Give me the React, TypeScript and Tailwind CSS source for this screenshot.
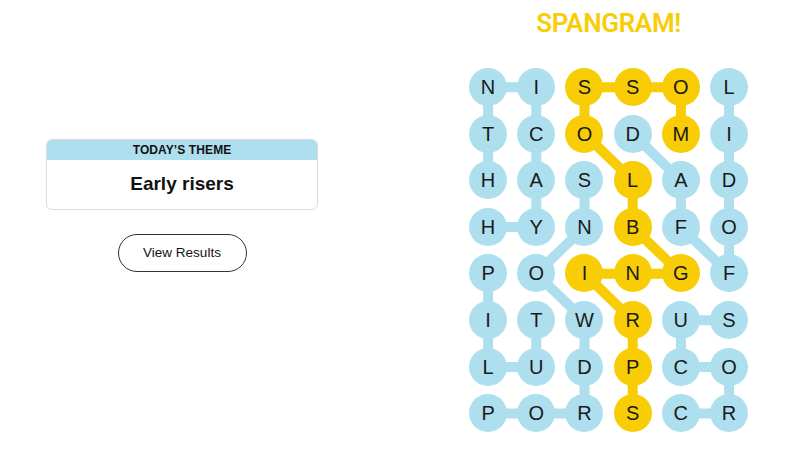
import React from "react";

const LETTERS = [
  "NISSOL",
  "TCODMI",
  "HASLAD",
  "HYNBFO",
  "PОINGF".replace("О", "O"),
  "ITWRUS",
  "LUDPCO",
  "PORSCR",
];

type E = [number, number, number, number];

const BLUE: E[] = [
  [0, 0, 0, 1], [0, 0, 1, 0], [0, 1, 1, 1], [0, 5, 1, 5], [1, 0, 2, 0],
  [1, 1, 2, 1], [1, 3, 2, 4], [1, 5, 2, 5], [2, 1, 3, 1], [2, 2, 3, 2],
  [2, 4, 3, 4], [2, 5, 3, 5], [3, 0, 3, 1], [3, 2, 4, 1], [3, 4, 4, 5],
  [3, 5, 4, 5], [4, 0, 5, 0], [4, 1, 5, 2], [5, 0, 6, 0], [5, 1, 6, 1],
  [5, 2, 6, 2], [5, 4, 5, 5], [5, 4, 6, 4], [6, 0, 6, 1], [6, 2, 7, 2],
  [6, 4, 6, 5], [6, 5, 7, 5], [7, 0, 7, 1], [7, 1, 7, 2], [7, 4, 7, 5],
];

const YELLOW: E[] = [
  [0, 2, 0, 3], [0, 3, 0, 4], [0, 4, 1, 4], [0, 2, 1, 2], [1, 2, 2, 3],
  [2, 3, 3, 3], [3, 3, 4, 4], [4, 2, 4, 3], [4, 3, 4, 4], [4, 2, 5, 3],
  [5, 3, 6, 3], [6, 3, 7, 3],
];

const YCELLS = new Set([
  "0-2", "0-3", "0-4", "1-4", "1-2", "2-3", "3-3", "4-4", "4-3", "4-2",
  "5-3", "6-3", "7-3",
]);

const CW = 48.2;
const CH = 46.6;
const cx = (c: number) => CW / 2 + c * CW;
const cy = (r: number) => CH / 2 + r * CH;

function Board() {
  return (
    <div className="relative w-[289.2px] h-[372.8px]">
      <svg
        className="absolute inset-0"
        width={289.2}
        height={372.8}
        viewBox="0 0 289.2 372.8"
      >
        {BLUE.map(([r1, c1, r2, c2], i) => (
          <line
            key={"b" + i}
            x1={cx(c1)}
            y1={cy(r1)}
            x2={cx(c2)}
            y2={cy(r2)}
            stroke="#aedfee"
            strokeWidth={10}
          />
        ))}
        {YELLOW.map(([r1, c1, r2, c2], i) => (
          <line
            key={"y" + i}
            x1={cx(c1)}
            y1={cy(r1)}
            x2={cx(c2)}
            y2={cy(r2)}
            stroke="#f8cd05"
            strokeWidth={10}
          />
        ))}
      </svg>
      <div className="relative grid grid-cols-[repeat(6,48.2px)] grid-rows-[repeat(8,46.6px)]">
        {LETTERS.map((row, r) =>
          row.split("").map((ch, c) => (
            <div key={r + "-" + c} className="flex items-center justify-center">
              <div
                className={
                  "w-[38px] h-[38px] rounded-full flex items-center justify-center text-[20px] leading-none text-[#1a1a1a] " +
                  (YCELLS.has(r + "-" + c) ? "bg-[#f8cd05]" : "bg-[#aedfee]")
                }
              >
                {ch}
              </div>
            </div>
          ))
        )}
      </div>
    </div>
  );
}

export default function App() {
  return (
    <div className="w-[800px] h-[464px] bg-white flex font-['Liberation_Sans',Arial,sans-serif]">
      <div className="w-[364px] px-[46px] pt-[139px] flex flex-col items-center">
        <div className="w-[272px] rounded-[6px] border border-[#dcdcdc] overflow-hidden">
          <div className="bg-[#aedfee] h-[20px] flex items-center justify-center text-[12px] font-bold text-[#121212] tracking-[0.1px]">
            TODAY’S THEME
          </div>
          <div className="h-[49px] flex items-center justify-center text-[19px] font-bold text-[#121212]">
            Early risers
          </div>
        </div>
        <div className="mt-[24px] w-[129px] h-[38px] rounded-full border border-[#333] flex items-center justify-center text-[13.5px] text-[#121212]">
          View Results
        </div>
      </div>
      <div className="ml-[100px] w-[289.2px] flex flex-col items-center pt-[10px]">
        <div className="text-[26px] leading-[26px] font-semibold text-[#f8cd05] font-['Roboto',sans-serif] tracking-[-0.3px]">
          SPANGRAM!
        </div>
        <div className="mt-[27.7px]">
          <Board />
        </div>
      </div>
    </div>
  );
}
